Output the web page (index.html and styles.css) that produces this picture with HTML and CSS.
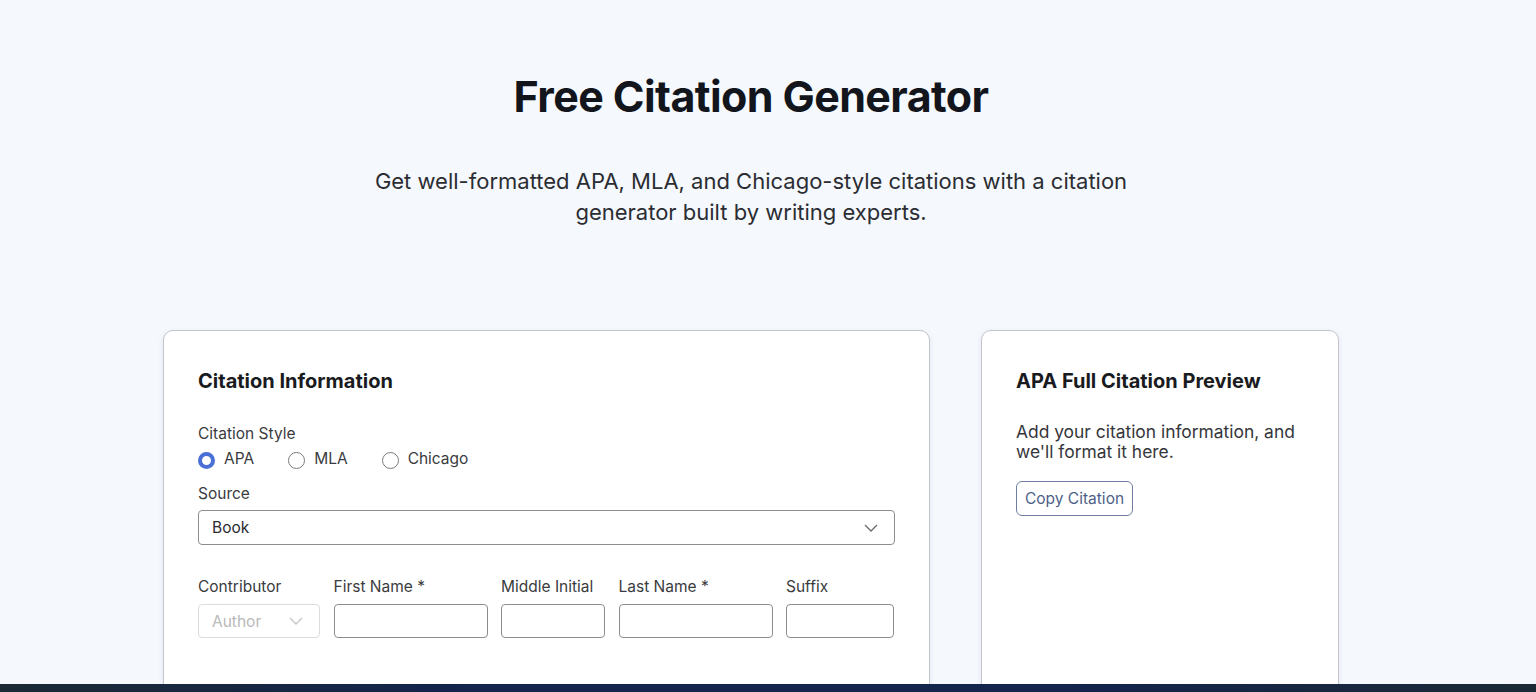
FILE: index.html
```html
<!DOCTYPE html>
<html lang="en">
<head>
  <meta charset="UTF-8">
  <meta name="viewport" content="width=device-width, initial-scale=1.0">
  <title>Free Citation Generator</title>
  <link rel="stylesheet" href="styles.css">
</head>
<body>

  <div class="page">
    <div class="hero">
      <h1>Free Citation Generator</h1>
      <p>Get well-formatted APA, MLA, and Chicago-style citations with a citation<br>generator built by writing experts.</p>
    </div>

    <div class="cards">
      <div class="card card-form">
        <h2>Citation Information</h2>

        <div class="label">Citation Style</div>
        <div class="radios">
          <label class="radio"><span class="dot checked"></span>APA</label>
          <label class="radio"><span class="dot"></span>MLA</label>
          <label class="radio"><span class="dot"></span>Chicago</label>
        </div>

        <div class="label source-label">Source</div>
        <div class="select">
          <span>Book</span>
          <svg width="14" height="8" viewBox="0 0 14 8"><path d="M1 1l6 6 6-6" fill="none" stroke="#6b6b6b" stroke-width="1.3"/></svg>
        </div>

        <div class="names">
          <div class="field">
            <div class="label">Contributor</div>
            <div class="select small disabled">
              <span>Author</span>
              <svg width="14" height="8" viewBox="0 0 14 8"><path d="M1 1l6 6 6-6" fill="none" stroke="#c4c4c4" stroke-width="1.3"/></svg>
            </div>
          </div>
          <div class="field">
            <div class="label">First Name *</div>
            <input type="text">
          </div>
          <div class="field">
            <div class="label">Middle Initial</div>
            <input type="text">
          </div>
          <div class="field">
            <div class="label">Last Name *</div>
            <input type="text">
          </div>
          <div class="field">
            <div class="label">Suffix</div>
            <input type="text">
          </div>
        </div>
      </div>

      <div class="card card-preview">
        <h2>APA Full Citation Preview</h2>
        <p>Add your citation information, and we'll format it here.</p>
        <button>Copy Citation</button>
      </div>
    </div>
  </div>

  <div class="taskbar"></div>

</body>
</html>
```

FILE: styles.css
```css
body {
  font-family: Inter, "Noto Sans", Arial, sans-serif;
  background-color: #f5f8fd;
  color: #222;
  margin: 0;
  padding: 0 34px 0 0;
  height: 692px;
  overflow: hidden;
}

.page {
  width: 1176px;
  margin: 0 auto;
}

.hero {
  text-align: center;
  padding-top: 68px;
}

.hero h1 {
  font-size: 43px;
  line-height: 56px;
  font-weight: 700;
  letter-spacing: -0.6px;
  color: #13151c;
  margin: 0;
}

.hero p {
  font-size: 22px;
  line-height: 31px;
  color: #2b2d33;
  margin: 42px 0 0;
}

.cards {
  display: flex;
  gap: 51px;
  margin-top: 102px;
}

.card {
  background-color: #fff;
  border: 1.5px solid #c3c4cc;
  border-radius: 10px;
  box-shadow: 0 2px 6px rgba(30, 40, 80, 0.08);
  height: 420px;
  box-sizing: border-box;
  padding: 38px 34px 0;
}

.card-form {
  width: 767px;
}

.card-preview {
  width: 358px;
}

.card h2 {
  font-size: 20px;
  line-height: 24px;
  font-weight: 700;
  color: #1a1b20;
  margin: 0;
}

.label {
  font-size: 15.5px;
  line-height: 20px;
  color: #3a3b40;
}

.card-form h2 {
  margin-bottom: 31px;
}

.radios {
  display: flex;
  margin-top: 5px;
}

.radio {
  display: flex;
  align-items: center;
  font-size: 15.5px;
  line-height: 20px;
  color: #3a3b40;
  margin-right: 34px;
}

.dot {
  width: 17px;
  height: 17px;
  box-sizing: border-box;
  border: 1px solid #7a7a7a;
  border-radius: 50%;
  margin-right: 9px;
  margin-top: 2px;
}

.dot.checked {
  border: 4.5px solid #4a6fd6;
}

.source-label {
  margin-top: 15px;
}

.select {
  margin-top: 6px;
  height: 35px;
  box-sizing: border-box;
  border: 1px solid #8d8d8d;
  border-radius: 4px;
  display: flex;
  align-items: center;
  justify-content: space-between;
  padding: 0 16px 0 13px;
  font-size: 15.5px;
  color: #2a2b30;
}

.names {
  display: grid;
  grid-template-columns: 122px 154px 104px 154px 108px;
  column-gap: 13.5px;
  margin-top: 32px;
}

.field .label {
  margin-bottom: 7px;
}

.field input {
  width: 100%;
  height: 34px;
  box-sizing: border-box;
  border: 1px solid #8d8d8d;
  border-radius: 4px;
  margin: 0;
  font-family: inherit;
}

.select.small {
  margin-top: 0;
  height: 34px;
  padding: 0 16px 0 13px;
}

.select.disabled {
  border-color: #dcdcdc;
  color: #b9b9b9;
}

.card-preview h2 {
  margin-bottom: 29px;
}

.card-preview p {
  font-size: 17.4px;
  line-height: 20px;
  color: #35363b;
  margin: 0;
}

.card-preview button {
  margin-top: 19px;
  height: 35px;
  padding: 0 8px;
  font-family: inherit;
  font-size: 15.5px;
  color: #4d5f88;
  background-color: #fff;
  border: 1px solid #6f7ea2;
  border-radius: 6px;
  cursor: pointer;
}

.taskbar {
  position: fixed;
  left: 0;
  right: 0;
  bottom: 0;
  height: 8px;
  background: linear-gradient(to right, #1b2a35, #13244d 30%, #13244d 70%, #1b2a35);
}
```
